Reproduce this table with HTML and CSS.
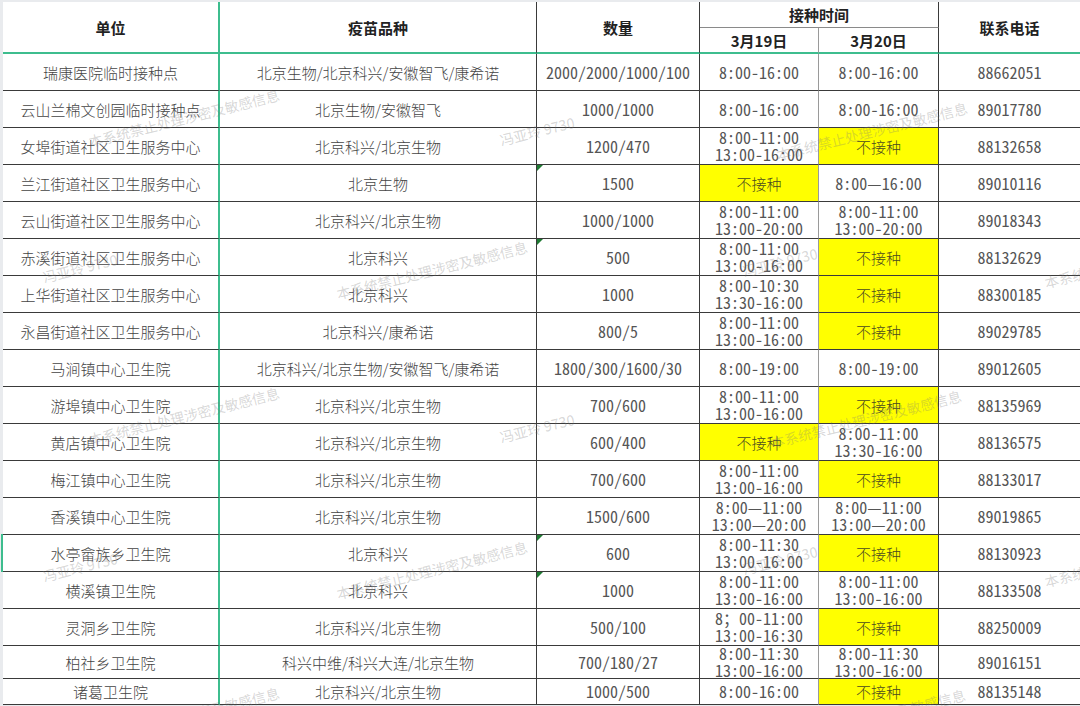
FILE: index.html
```html
<!DOCTYPE html>
<html lang="zh-CN">
<head>
<meta charset="utf-8">
<title>接种点安排</title>
<link rel="stylesheet" href="styles.css">
</head>
<body>
<div class="page">
  <div class="sheet">
    <div class="c h first span2">单位</div>
    <div class="c h span2">疫苗品种</div>
    <div class="c h span2">数量</div>
    <div class="c h group">接种时间</div>
    <div class="c h last span2">联系电话</div>
    <div class="c h sub mid">3月19日</div>
    <div class="c h sub">3月20日</div>

    <div class="c first">瑞康医院临时接种点</div><div class="c">北京生物/北京科兴/安徽智飞/康希诺</div><div class="c n">2000/2000/1000/100</div><div class="c n mid">8:00-16:00</div><div class="c n">8:00-16:00</div><div class="c n last">88662051</div>

    <div class="c first">云山兰棉文创园临时接种点</div><div class="c">北京生物/安徽智飞</div><div class="c n">1000/1000</div><div class="c n mid">8:00-16:00</div><div class="c n">8:00-16:00</div><div class="c n last">89017780</div>

    <div class="c first">女埠街道社区卫生服务中心</div><div class="c">北京科兴/北京生物</div><div class="c n">1200/470</div><div class="c n mid">8:00-11:00<br>13:00-16:00</div><div class="c y">不接种</div><div class="c n last">88132658</div>

    <div class="c first">兰江街道社区卫生服务中心</div><div class="c">北京生物</div><div class="c n tri">1500</div><div class="c y mid">不接种</div><div class="c n">8:00—16:00</div><div class="c n last">89010116</div>

    <div class="c first">云山街道社区卫生服务中心</div><div class="c">北京科兴/北京生物</div><div class="c n">1000/1000</div><div class="c n mid">8:00-11:00<br>13:00-20:00</div><div class="c n">8:00-11:00<br>13:00-20:00</div><div class="c n last">89018343</div>

    <div class="c first">赤溪街道社区卫生服务中心</div><div class="c">北京科兴</div><div class="c n tri">500</div><div class="c n mid">8:00-11:00<br>13:00-16:00</div><div class="c y">不接种</div><div class="c n last">88132629</div>

    <div class="c first">上华街道社区卫生服务中心</div><div class="c">北京科兴</div><div class="c n">1000</div><div class="c n mid">8:00-10:30<br>13:30-16:00</div><div class="c y">不接种</div><div class="c n last">88300185</div>

    <div class="c first">永昌街道社区卫生服务中心</div><div class="c">北京科兴/康希诺</div><div class="c n">800/5</div><div class="c n mid">8:00-11:00<br>13:00-16:00</div><div class="c y">不接种</div><div class="c n last">89029785</div>

    <div class="c first">马涧镇中心卫生院</div><div class="c">北京科兴/北京生物/安徽智飞/康希诺</div><div class="c n">1800/300/1600/30</div><div class="c n mid">8:00-19:00</div><div class="c n">8:00-19:00</div><div class="c n last">89012605</div>

    <div class="c first">游埠镇中心卫生院</div><div class="c">北京科兴/北京生物</div><div class="c n">700/600</div><div class="c n mid">8:00-11:00<br>13:00-16:00</div><div class="c y">不接种</div><div class="c n last">88135969</div>

    <div class="c first">黄店镇中心卫生院</div><div class="c">北京科兴/北京生物</div><div class="c n">600/400</div><div class="c y mid">不接种</div><div class="c n">8:00-11:00<br>13:30-16:00</div><div class="c n last">88136575</div>

    <div class="c first">梅江镇中心卫生院</div><div class="c">北京科兴/北京生物</div><div class="c n">700/600</div><div class="c n mid">8:00-11:00<br>13:00-16:00</div><div class="c y">不接种</div><div class="c n last">88133017</div>

    <div class="c first">香溪镇中心卫生院</div><div class="c">北京科兴/北京生物</div><div class="c n">1500/600</div><div class="c n mid">8:00—11:00<br>13:00—20:00</div><div class="c n">8:00—11:00<br>13:00—20:00</div><div class="c n last">89019865</div>

    <div class="c first sel">水亭畲族乡卫生院</div><div class="c">北京科兴</div><div class="c n tri">600</div><div class="c n mid">8:00-11:30<br>13:00-16:00</div><div class="c y">不接种</div><div class="c n last">88130923</div>

    <div class="c first">横溪镇卫生院</div><div class="c">北京科兴</div><div class="c n tri">1000</div><div class="c n mid">8:00-11:00<br>13:00-16:00</div><div class="c n">8:00-11:00<br>13:00-16:00</div><div class="c n last">88133508</div>

    <div class="c first">灵洞乡卫生院</div><div class="c">北京科兴/北京生物</div><div class="c n">500/100</div><div class="c n mid">8；00-11:00<br>13:00-16:30</div><div class="c y">不接种</div><div class="c n last">88250009</div>

    <div class="c first">柏社乡卫生院</div><div class="c">科兴中维/科兴大连/北京生物</div><div class="c n">700/180/27</div><div class="c n mid">8:00-11:30<br>13:00-16:00</div><div class="c n">8:00-11:30<br>13:00-16:00</div><div class="c n last">89016151</div>

    <div class="c first">诸葛卫生院</div><div class="c">北京科兴/北京生物</div><div class="c n">1000/500</div><div class="c n mid">8:00-16:00</div><div class="c y">不接种</div><div class="c n last">88135148</div>
  </div>

  <div class="wm" aria-hidden="true">
    <span class="wa a1">本系统禁止处理涉密及敏感信息</span>
    <span class="wb b1">冯亚玲 9730</span>
    <span class="wa a2">本系统禁止处理涉密及敏感信息</span>
    <span class="wb b2">冯亚玲 9730</span>
    <span class="wa a3">本系统禁止处理涉密及敏感信息</span>
    <span class="wb b3">冯亚玲 9730</span>
    <span class="wa a4">本系统禁止处理涉密及敏感信息</span>
    <span class="wa a5">本系统禁止处理涉密及敏感信息</span>
    <span class="wb b4">冯亚玲 9730</span>
    <span class="wa a6">本系统禁止处理涉密及敏感信息</span>
    <span class="wb b5">冯亚玲 9730</span>
    <span class="wa a7">本系统禁止处理涉密及敏感信息</span>
    <span class="wb b6">冯亚玲 9730</span>
    <span class="wa a8">本系统禁止处理涉密及敏感信息</span>
    <span class="wa a9">本系统禁止处理涉密及敏感信息</span>
    <span class="wb b7">冯亚玲 9730</span>
    <span class="wa a10">本系统禁止处理涉密及敏感信息</span>
  </div>
</div>
</body>
</html>
```

FILE: styles.css
```css
html, body {
  margin: 0;
  padding: 0;
}
body {
  background: #e6e9ee;
  font-family: "Noto Sans CJK SC", sans-serif;
}
.page {
  position: relative;
  width: 1080px;
  height: 706px;
  overflow: hidden;
  box-sizing: border-box;
  padding: 2px 0 0 3px;
  background: #e9ebee;
}
.sheet {
  display: grid;
  grid-template-columns: 217px 317px 163px 119px 120px 141px;
  grid-template-rows: 26px 26px repeat(16, 37px) 33px 26px;
  background: #fff;
}
.c {
  box-sizing: border-box;
  display: flex;
  align-items: center;
  justify-content: center;
  text-align: center;
  border-right: 1px solid #3a3a3a;
  border-bottom: 1px solid #3a3a3a;
  font-size: 15px;
  font-weight: 300;
  line-height: 17px;
  color: #444;
  white-space: nowrap;
  position: relative;
}
.c.first {
  border-right: 2px solid #3dbd8e;
}
.c.mid {
  border-right-color: #9a9a9a;
}
.c.last {
  border-right: none;
}
.n {
  font-family: "Noto Sans Mono CJK SC", "Liberation Mono", monospace;
  font-size: 16px;
  font-weight: 400;
  color: #555;
}
.y {
  background: #ffff00;
  color: #4a4a20;
}
.h {
  font-weight: bold;
  color: #222;
  font-size: 15px;
  border-bottom: 2px solid #3dbd8e;
}
.span2 {
  grid-row: span 2;
}
.group {
  grid-column: span 2;
  border-bottom: 1px solid #8a8a8a;
}
.sub {
  font-family: "Noto Sans CJK SC", sans-serif;
}
.tri::before {
  content: "";
  position: absolute;
  left: 0;
  top: 0;
  border-top: 6px solid #1f7a33;
  border-right: 6px solid transparent;
}
.sel::after {
  content: "";
  position: absolute;
  left: -2px;
  top: -1px;
  bottom: -1px;
  width: 2px;
  background: #3dbd8e;
}

/* watermark overlay */
.wm {
  position: absolute;
  inset: 0;
  pointer-events: none;
}
.wm span {
  position: absolute;
  transform: translate(-50%, -50%) rotate(-14deg);
  font-size: 14px;
  line-height: 16px;
  color: rgba(120, 120, 120, 0.3);
  white-space: nowrap;
  font-family: "Noto Sans CJK SC", sans-serif;
}
.a1 { left: 184px; top: 118px; }
.b1 { left: 537px; top: 131px; }
.a2 { left: 872px; top: 131px; }
.b2 { left: 80px; top: 268px; }
.a3 { left: 432px; top: 270px; }
.b3 { left: 780px; top: 262px; }
.a4 { left: 1140px; top: 259px; }
.a5 { left: 184px; top: 416px; }
.b4 { left: 537px; top: 428px; }
.a6 { left: 866px; top: 419px; }
.b5 { left: 80px; top: 567px; }
.a7 { left: 432px; top: 570px; }
.b6 { left: 780px; top: 560px; }
.a8 { left: 1140px; top: 558px; }
.a9 { left: 184px; top: 716px; }
.b7 { left: 537px; top: 728px; }
.a10 { left: 870px; top: 718px; }
```
